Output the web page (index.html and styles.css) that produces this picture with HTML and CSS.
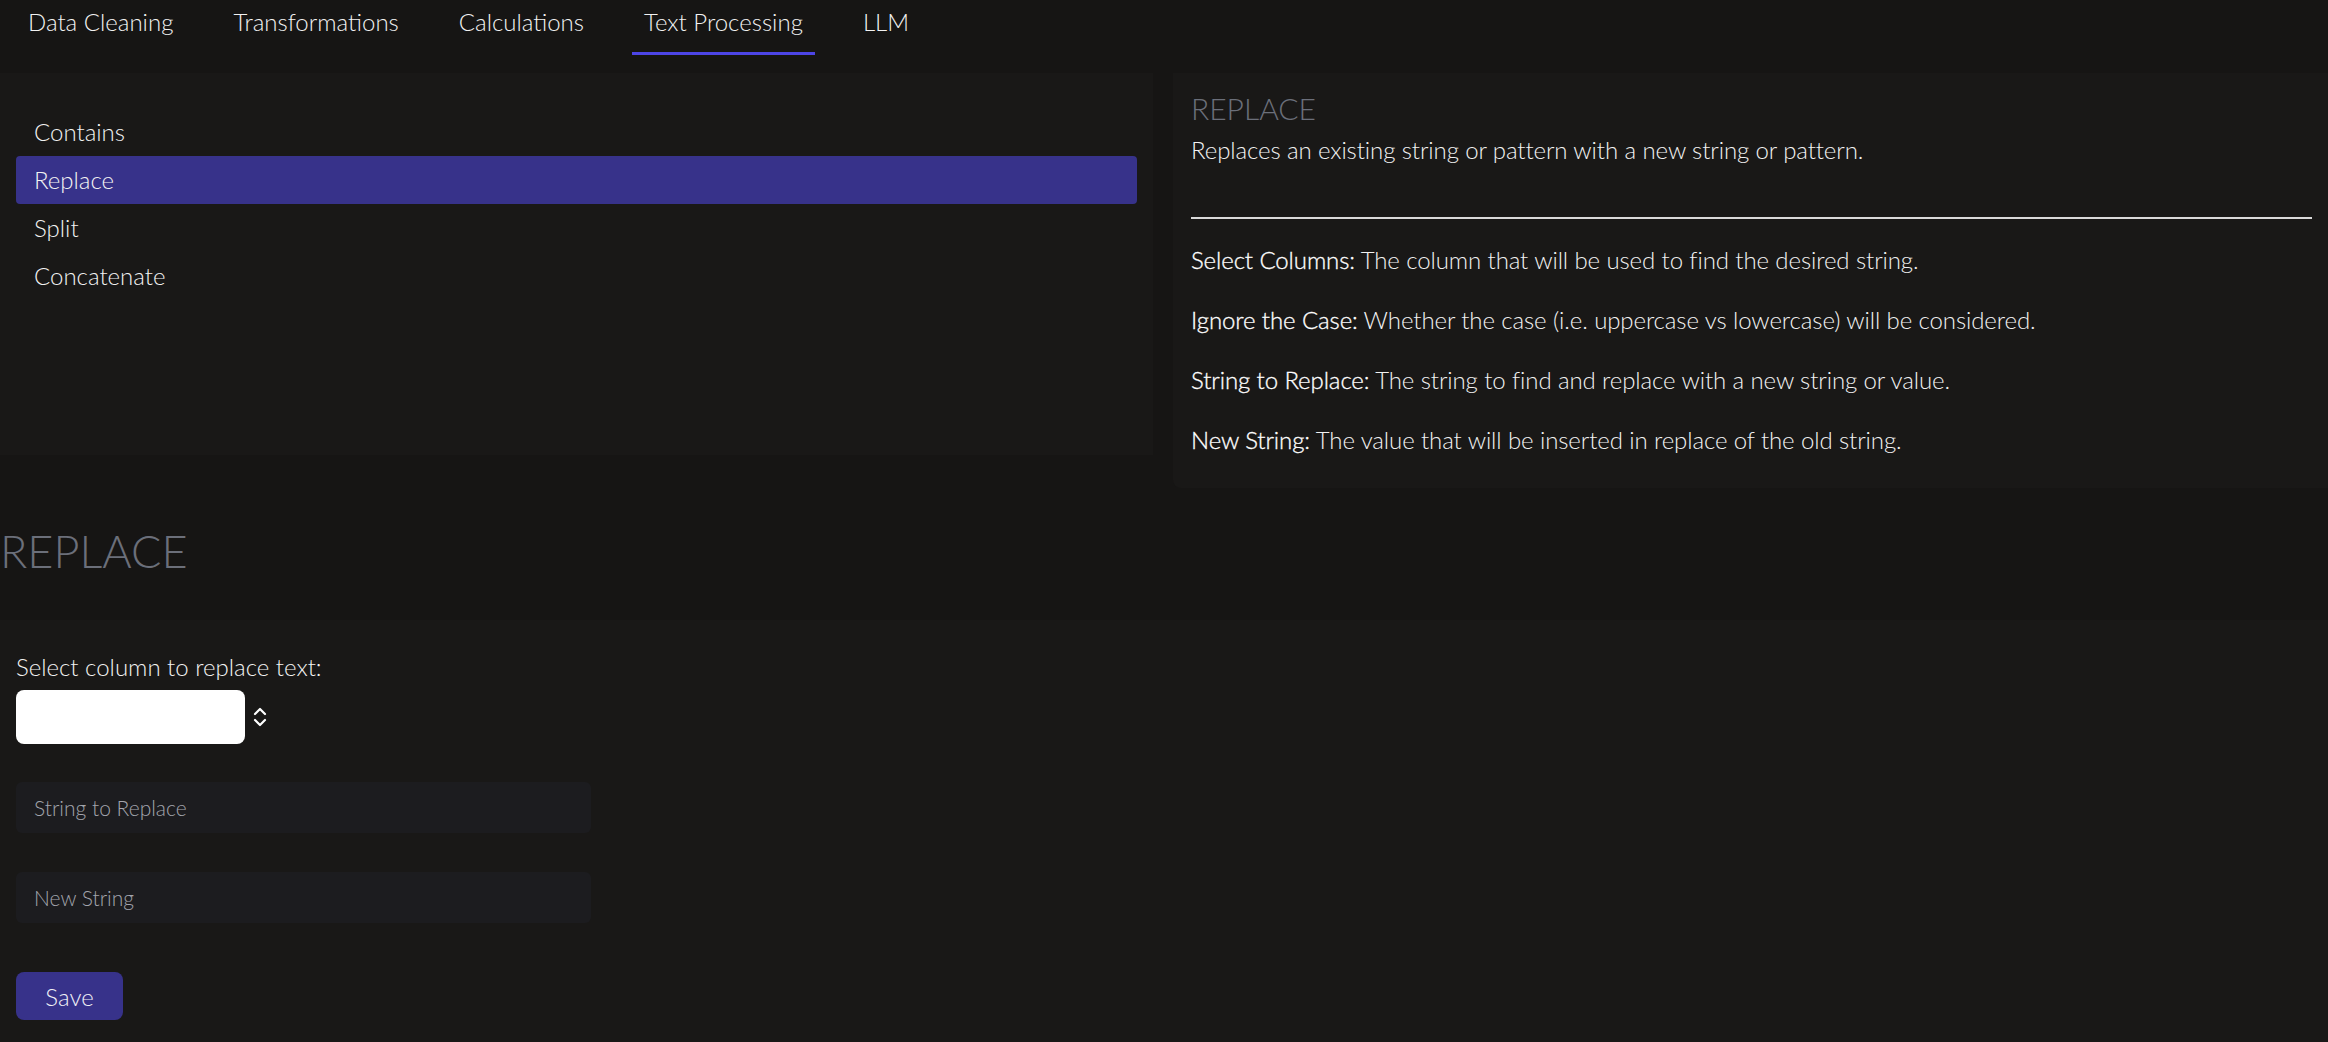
FILE: index.html
```html
<!DOCTYPE html>
<html lang="en">
<head>
  <meta charset="UTF-8" />
  <meta name="viewport" content="width=device-width, initial-scale=1.0"/>
  <title>Text Processing - Replace</title>
  <link rel="stylesheet" href="styles.css">
</head>
<body>
  <nav class="tabs">
    <a class="tab">Data Cleaning</a>
    <a class="tab">Transformations</a>
    <a class="tab">Calculations</a>
    <a class="tab active">Text Processing</a>
    <a class="tab">LLM</a>
  </nav>

  <section class="top">
    <div class="op-list">
      <div class="op-item">Contains</div>
      <div class="op-item selected">Replace</div>
      <div class="op-item">Split</div>
      <div class="op-item">Concatenate</div>
    </div>

    <div class="op-info">
      <h3>REPLACE</h3>
      <p class="op-desc">Replaces an existing string or pattern with a new string or pattern.</p>
      <hr />
      <p class="param"><span class="param-name">Select Columns:</span> The column that will be used to find the desired string.</p>
      <p class="param"><span class="param-name">Ignore the Case:</span> Whether the case (i.e. uppercase vs lowercase) will be considered.</p>
      <p class="param"><span class="param-name">String to Replace:</span> The string to find and replace with a new string or value.</p>
      <p class="param"><span class="param-name">New String:</span> The value that will be inserted in replace of the old string.</p>
    </div>
  </section>

  <h2 class="form-title">REPLACE</h2>

  <form class="op-form">
    <label for="column">Select column to replace text:</label>
    <div class="select-row">
      <select id="column" name="column"></select>
      <svg class="chevrons" width="14" height="22" viewBox="0 0 14 22">
        <path d="M2 8 L7 3 L12 8" fill="none" stroke="#fff" stroke-width="2.2" stroke-linecap="round" stroke-linejoin="round"/>
        <path d="M2 14 L7 19 L12 14" fill="none" stroke="#fff" stroke-width="2.2" stroke-linecap="round" stroke-linejoin="round"/>
      </svg>
    </div>

    <input type="text" class="text-input" placeholder="String to Replace" />
    <input type="text" class="text-input" placeholder="New String" />

    <button type="button" class="btn">Save</button>
  </form>
</body>
</html>
```

FILE: styles.css
```css
body {
  font-family: 'Lato', 'Open Sans', sans-serif;
  font-weight: 300;
  font-size: 24px;
  margin: 0;
  padding: 0;
  background-color: #161514;
  color: #f2f2f2;
}

.tabs {
  display: flex;
  gap: 36px;
  height: 73px;
  padding-left: 16px;
  align-items: flex-start;
}

.tab {
  box-sizing: border-box;
  height: 55px;
  padding: 6px 12px 0;
  line-height: 32px;
  border-bottom: 3px solid transparent;
  cursor: pointer;
}

.tab.active {
  border-bottom-color: #4d45e6;
}

.top {
  display: grid;
  grid-template-columns: 1153px 1fr;
  gap: 20px;
  align-items: start;
}

.op-list {
  background-color: #191817;
  height: 382px;
  box-sizing: border-box;
  padding: 35px 16px;
}

.op-item {
  height: 48px;
  line-height: 48px;
  padding-left: 18px;
  border-radius: 4px;
  cursor: pointer;
}

.op-item.selected {
  background-color: #37328a;
}

.op-info {
  background-color: #191817;
  padding: 18px 16px 30px 18px;
  border-radius: 0 0 0 8px;
}

.op-info h3 {
  margin: 0;
  font-size: 30px;
  font-weight: 300;
  line-height: 34px;
  color: #6b6f7a;
}

.op-desc {
  margin: 7px 0 0;
  line-height: 36px;
  letter-spacing: -0.1px;
}

.op-info hr {
  margin: 49px 0 0;
  border: none;
  height: 2px;
  background-color: #d9d9d9;
}

.param {
  margin: 24px 0 0;
  line-height: 36px;
  letter-spacing: -0.1px;
}

.op-info hr + .param {
  margin-top: 23px;
}

.param-name {
  color: #ffffff;
  -webkit-text-stroke: 0.3px #ffffff;
}

.form-title {
  margin: 36px 0 42px;
  font-size: 45px;
  font-weight: 300;
  line-height: 54px;
  color: #6b6f7a;
}

.op-form {
  background-color: #191817;
  padding: 29px 16px 23px;
  display: flex;
  flex-direction: column;
  align-items: flex-start;
}

.op-form label {
  line-height: 36px;
  margin-bottom: 5px;
}

.select-row {
  display: flex;
  align-items: center;
  gap: 8px;
  margin-bottom: 38px;
}

.select-row select {
  appearance: none;
  width: 229px;
  height: 54px;
  border: none;
  border-radius: 8px;
  background-color: #fff;
  font-family: inherit;
  font-size: 21px;
}

.text-input {
  box-sizing: border-box;
  width: 575px;
  height: 51px;
  padding: 0 18px;
  border: none;
  border-radius: 6px;
  background-color: #1c1c1f;
  color: #e6e6e6;
  font-family: inherit;
  font-size: 21px;
  font-weight: 300;
  margin-bottom: 39px;
}

.text-input::placeholder {
  color: #a3a5ad;
}

.text-input + .btn {
  margin-top: 10px;
}

.btn {
  width: 107px;
  height: 48px;
  border: none;
  border-radius: 8px;
  background-color: #37328a;
  color: #f0f0f6;
  font-family: inherit;
  font-size: 24px;
  font-weight: 300;
  cursor: pointer;
}
```
